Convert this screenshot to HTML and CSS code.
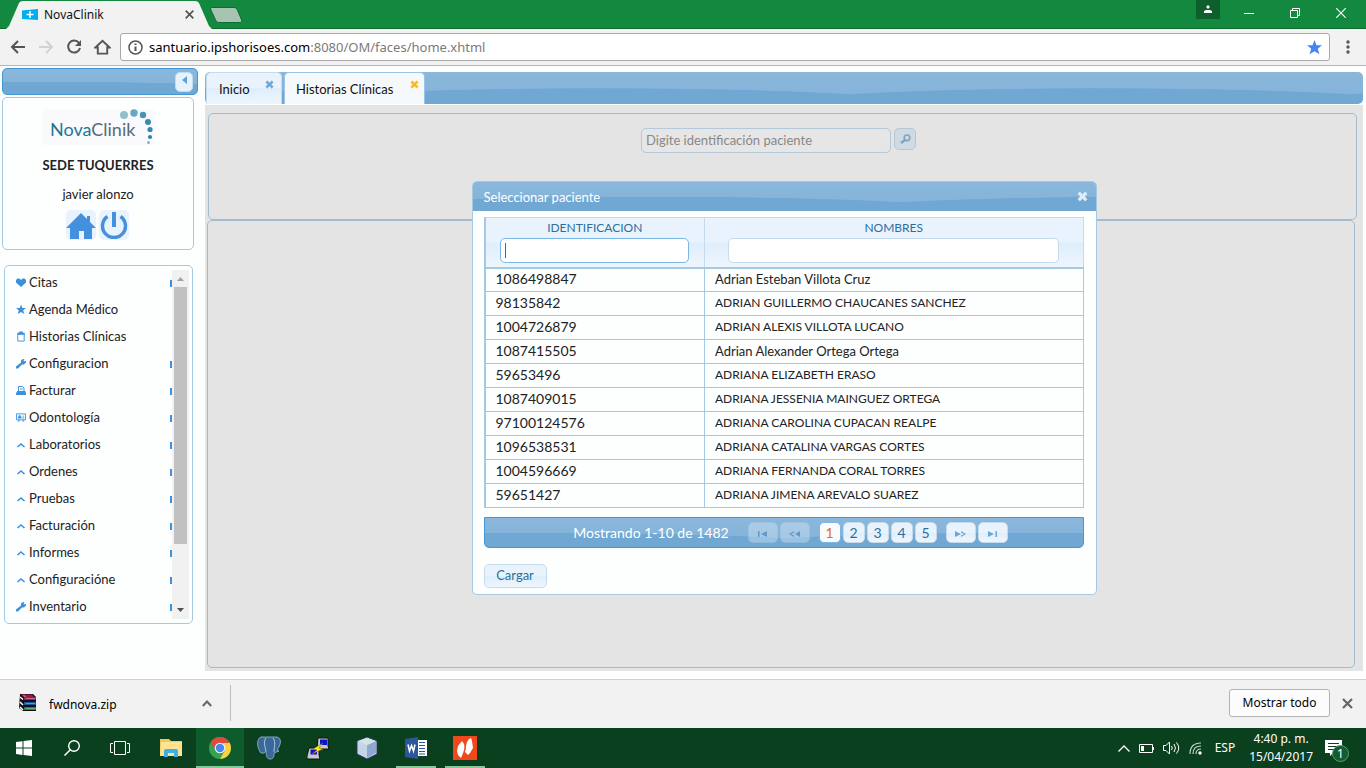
FILE: index.html
```html
<!DOCTYPE html>
<html lang="es">
<head>
<meta charset="utf-8">
<title>NovaClinik</title>
<link rel="stylesheet" href="styles.css">
</head>
<body>
<svg class="defs" aria-hidden="true">
  <symbol id="x" viewBox="0 0 10 10"><path d="M1 2.500 2.500 1 5 3.300 7.500 1 9 2.500 6.800 5 9 7.500 7.500 9 5 6.700 2.500 9 1 7.500 3.200 5Z" fill="currentColor" stroke="currentColor" stroke-width=".8"/></symbol>
  <symbol id="heart" viewBox="0 0 10 10"><path d="M5 9.500 0 5V2.500L1.500 1H3.500L5 2.500 6.500 1H8.500L10 2.500V5Z" fill="currentColor"/></symbol>
  <symbol id="star" viewBox="0 0 10 10"><path d="M5 0 6.300 3.500H10L7.200 5.800 8.300 9.500 5 7.500 1.700 9.500 2.800 5.800 0 3.500H3.700Z" fill="currentColor"/></symbol>
  <symbol id="clip" viewBox="0 0 10 12"><path d="M1.500 3H8.500V11H1.500Z" fill="none" stroke="currentColor"/><path d="M1 2H3V.5H7V2H9V4H1Z" fill="currentColor"/></symbol>
  <symbol id="wrench" viewBox="0 0 10 10"><path d="M0 8 5 4V2L7 .5H8.500L7.500 2 8.500 3 10 2V4L8 6H6L2 10H0Z" fill="currentColor"/></symbol>
  <symbol id="print" viewBox="0 0 10 10"><path d="M2.500 5.500V1H6.500L8 2.500V5.500M4 3.500H6.500" fill="none" stroke="currentColor"/><path d="M1 5.500H9.500V7H10V9.500H0V7H1Z" fill="currentColor"/></symbol>
  <symbol id="card" viewBox="0 0 11 10"><path d="M.5 1H10.500V7.500H.5Z" fill="none" stroke="currentColor"/><path d="M3 2.500H5V4H6V6H2V4H3ZM7 3H9V4H7ZM7 5H9V6H7ZM2 8H4V9.500H2ZM7 8H9V9.500H7Z" fill="currentColor"/></symbol>
  <symbol id="up" viewBox="0 0 10 10"><path d="M1.500 7.500 5 4.500 8.500 7.500" fill="none" stroke="currentColor" stroke-width="1.600"/></symbol>
</svg>

<header class="tabstrip">
  <div class="browser-tab">
    <svg class="tab-shape" viewBox="0 0 206 29" preserveAspectRatio="none"><path d="M0 29 3 26 13 3Q14 1 17 1H189Q192 1 193 3L203 26 206 29Z" fill="#f2f2f2"/></svg>
    <svg class="favicon" viewBox="0 0 16 11"><path d="M0 1.500 16 0V11L0 10Z" fill="#00adef"/><path d="M8 2V9M4.500 5.500H11.500" stroke="#fff" stroke-width="1.500"/></svg>
    <span class="tab-title">NovaClinik</span>
    <button class="plain" aria-label="Cerrar pestaña"><svg width="9" height="9" viewBox="0 0 9 9"><path d="M.7.7 8.300 8.300M8.300.7.7 8.300" stroke="#555" stroke-width="1.700"/></svg></button>
  </div>
  <button class="plain new-tab" aria-label="Nueva pestaña"><svg width="33" height="16" viewBox="0 0 33 16"><path d="M2 .5H24Q26 .5 27 2L32 14Q32 15.500 30 15.500H9Q7 15.500 6 14L.5 2Q0 .5 2 .5Z" fill="#a6c4b1" stroke="#0b6e31"/></svg></button>
  <div class="window-controls">
    <button class="plain profile" aria-label="Perfil"><svg width="8" height="9" viewBox="0 0 8 9"><path d="M4 0 6 2 4 4 2 2ZM0 6 2 5H6L8 6V8H0Z" fill="#fff"/></svg></button>
    <button class="plain" aria-label="Minimizar"><svg width="10" height="10" viewBox="0 0 10 10"><path d="M0 5.500H10" stroke="#fff"/></svg></button>
    <button class="plain" aria-label="Restaurar"><svg width="10" height="10" viewBox="0 0 10 10"><path d="M.5 2.500H7.500V9.500H.5ZM2.500 2.500V.5H9.500V7.500H7.500" fill="none" stroke="#fff"/></svg></button>
    <button class="plain" aria-label="Cerrar"><svg width="10" height="10" viewBox="0 0 10 10"><path d="M.3.3 9.700 9.700M9.700.3.3 9.700" stroke="#fff" stroke-width="1.200"/></svg></button>
  </div>
</header>

<nav class="toolbar" aria-label="Navegación">
  <button class="plain" aria-label="Atrás"><svg width="16" height="14" viewBox="0 0 16 14"><path d="M15 7H2M8 1 2 7 8 13" fill="none" stroke="#555" stroke-width="2"/></svg></button>
  <button class="plain" aria-label="Adelante"><svg width="16" height="14" viewBox="0 0 16 14"><path d="M1 7H14M8 1 14 7 8 13" fill="none" stroke="#d2d2d2" stroke-width="2"/></svg></button>
  <button class="plain" aria-label="Recargar"><svg width="16" height="16" viewBox="0 0 16 16"><path d="M13 4A6 6 0 1 0 14 9" fill="none" stroke="#555" stroke-width="2"/><path d="M15 1V7H9Z" fill="#555"/></svg></button>
  <button class="plain" aria-label="Inicio"><svg width="17" height="16" viewBox="0 0 18 16"><path d="M1.500 8.500 9 1.500 16.500 8.500H14V15H4V8.500Z" fill="none" stroke="#555" stroke-width="2"/></svg></button>
  <div class="address">
    <svg width="15" height="15" viewBox="0 0 15 15"><circle cx="7.500" cy="7.500" r="6.500" fill="none" stroke="#555" stroke-width="1.500"/><path d="M7.500 6.500V11M7.500 3.500V5" stroke="#555" stroke-width="2"/></svg>
    <span class="url">santuario.ipshorisoes.com<span>:8080/OM/faces/home.xhtml</span></span>
    <svg class="star" width="15" height="15"><use href="#star"/></svg>
  </div>
  <button class="plain menu-dots" aria-label="Menú"><svg width="4" height="14" viewBox="0 0 4 14"><circle cx="2" cy="2" r="1.700" fill="#555"/><circle cx="2" cy="7" r="1.700" fill="#555"/><circle cx="2" cy="12" r="1.700" fill="#555"/></svg></button>
</nav>

<div class="page">
  <aside class="sidebar">
    <div class="side-head gloss"><button class="collapse" aria-label="Contraer"><svg width="5" height="8" viewBox="0 0 5 8"><path d="M5 0V8L0 4Z" fill="#5ba0d6"/></svg></button></div>
    <section class="user-card">
      <div class="logo"><span><b>Nova</b>Clinik</span>
        <svg width="36" height="36" viewBox="0 0 36 36"><circle cx="6" cy="6" r="4" fill="#91bfd0"/><circle cx="16" cy="4" r="3.700" fill="#65a8c1"/><circle cx="25" cy="6" r="3.200" fill="#4594b4"/><circle cx="30" cy="13" r="3" fill="#358bb0"/><circle cx="32" cy="20.500" r="2.600" fill="#3289b0"/><circle cx="32" cy="28" r="2.100" fill="#2a83ac"/><circle cx="30.500" cy="33.500" r="1.500" fill="#7fb6cd"/></svg>
      </div>
      <strong>SEDE TUQUERRES</strong>
      <span>javier alonzo</span>
      <div class="user-actions">
        <a href="#home" aria-label="Inicio"><svg width="30" height="28" viewBox="0 0 30 28"><path d="M15 2 21 8V5H24V11L30 17H26V28H18V20H13V28H4V17H0Z" fill="#458fdf"/></svg></a>
        <a href="#logout" aria-label="Salir"><svg width="28" height="28" viewBox="0 0 28 28"><path d="M7.500 5.500A11.500 11.500 0 1 0 20.500 5.500" fill="none" stroke="#458fdf" stroke-width="3.400"/><path d="M14 1V16" stroke="#458fdf" stroke-width="4"/></svg></a>
      </div>
    </section>
    <nav class="menu" aria-label="Menú principal">
      <ul>
        <li class="sub"><a href="#citas"><svg><use href="#heart"/></svg>Citas</a></li>
        <li><a href="#agenda"><svg><use href="#star"/></svg>Agenda Médico</a></li>
        <li><a href="#historias"><svg><use href="#clip"/></svg>Historias Clínicas</a></li>
        <li class="sub"><a href="#config"><svg><use href="#wrench"/></svg>Configuracion</a></li>
        <li class="sub"><a href="#facturar"><svg><use href="#print"/></svg>Facturar</a></li>
        <li class="sub"><a href="#odonto"><svg><use href="#card"/></svg>Odontología</a></li>
        <li class="sub"><a href="#lab"><svg><use href="#up"/></svg>Laboratorios</a></li>
        <li class="sub"><a href="#ordenes"><svg><use href="#up"/></svg>Ordenes</a></li>
        <li class="sub"><a href="#pruebas"><svg><use href="#up"/></svg>Pruebas</a></li>
        <li class="sub"><a href="#facturacion"><svg><use href="#up"/></svg>Facturación</a></li>
        <li class="sub"><a href="#informes"><svg><use href="#up"/></svg>Informes</a></li>
        <li class="sub"><a href="#configuracione"><svg><use href="#up"/></svg>Configuracióne</a></li>
        <li class="sub"><a href="#inventario"><svg><use href="#wrench"/></svg>Inventario</a></li>
      </ul>
      <div class="scrollbar"><svg width="7" height="4" viewBox="0 0 7 4"><path d="M0 4H7L3.500 0Z" fill="#a3a3a3"/></svg><i></i><svg width="7" height="4" viewBox="0 0 7 4"><path d="M0 0H7L3.500 4Z" fill="#505050"/></svg></div>
    </nav>
  </aside>

  <main>
    <div class="tabs gloss">
      <div class="tab"><a href="#inicio">Inicio</a><button class="plain" aria-label="Cerrar Inicio"><svg width="9" height="9"><use href="#x"/></svg></button></div>
      <div class="tab active"><a href="#hc">Historias Clínicas</a><button class="plain" aria-label="Cerrar Historias Clínicas"><svg width="9" height="9"><use href="#x"/></svg></button></div>
    </div>
    <div class="workspace">
      <section class="panel search">
        <input class="field" type="text" aria-label="Identificación paciente" placeholder="Digite identificación paciente">
        <button class="btn find" aria-label="Buscar"><svg width="11" height="10" viewBox="0 0 11 10"><circle cx="7" cy="3.800" r="2.800" fill="none" stroke="#7ba4c4" stroke-width="1.600"/><path d="M5 6 1 9" stroke="#7ba4c4" stroke-width="2.200"/></svg></button>
      </section>
      <section class="panel body"></section>
      <div class="overlay">
        <div class="dialog" role="dialog" aria-labelledby="dlg">
          <div class="dialog-head gloss"><span id="dlg">Seleccionar paciente</span><button class="plain" aria-label="Cerrar"><svg width="11" height="11"><use href="#x"/></svg></button></div>
          <div class="dialog-body">
            <table>
              <colgroup><col class="c1"><col></colgroup>
              <thead><tr>
                <th><label for="fid">IDENTIFICACION</label><span class="focus"><input id="fid" type="text"></span></th>
                <th><label for="fnom">NOMBRES</label><span class="wide"><input id="fnom" type="text"></span></th>
              </tr></thead>
              <tbody>
                <tr><td class="num">1086498847</td><td>Adrian Esteban Villota Cruz</td></tr>
                <tr><td class="num">98135842</td><td class="caps">ADRIAN GUILLERMO CHAUCANES SANCHEZ</td></tr>
                <tr><td class="num">1004726879</td><td class="caps">ADRIAN ALEXIS VILLOTA LUCANO</td></tr>
                <tr><td class="num">1087415505</td><td>Adrian Alexander Ortega Ortega</td></tr>
                <tr><td class="num">59653496</td><td class="caps">ADRIANA ELIZABETH ERASO</td></tr>
                <tr><td class="num">1087409015</td><td class="caps">ADRIANA JESSENIA MAINGUEZ ORTEGA</td></tr>
                <tr><td class="num">97100124576</td><td class="caps">ADRIANA CAROLINA CUPACAN REALPE</td></tr>
                <tr><td class="num">1096538531</td><td class="caps">ADRIANA CATALINA VARGAS CORTES</td></tr>
                <tr><td class="num">1004596669</td><td class="caps">ADRIANA FERNANDA CORAL TORRES</td></tr>
                <tr><td class="num">59651427</td><td class="caps">ADRIANA JIMENA AREVALO SUAREZ</td></tr>
              </tbody>
            </table>
            <div class="pager gloss">
              <span class="count">Mostrando 1-10 de 1482</span>
              <div class="group">
                <button class="btn nav" disabled aria-label="Primera"><svg width="9" height="6" viewBox="0 0 9 6"><path d="M0 0H1.500V6H0ZM9 0V6L3 3Z"/></svg></button>
                <button class="btn nav" disabled aria-label="Anterior"><svg width="11" height="6" viewBox="0 0 11 6"><path d="M11 0V6L6 3ZM5 0V1.500L2 3 5 4.500V6L0 3Z"/></svg></button>
              </div>
              <div class="group pages">
                <button class="btn current">1</button><button class="btn">2</button><button class="btn">3</button><button class="btn">4</button><button class="btn">5</button>
              </div>
              <div class="group">
                <button class="btn nav" aria-label="Siguiente"><svg width="11" height="6" viewBox="0 0 11 6"><path d="M0 0V6L6 3ZM6 0V1.500L9 3 6 4.500V6L11 3Z"/></svg></button>
                <button class="btn nav" aria-label="Última"><svg width="9" height="6" viewBox="0 0 9 6"><path d="M9 0H7.500V6H9ZM0 0V6L6 3Z"/></svg></button>
              </div>
            </div>
            <button class="btn load">Cargar</button>
          </div>
        </div>
      </div>
    </div>
  </main>
</div>

<section class="downloads" aria-label="Descargas">
  <div class="download">
    <svg width="18" height="18" viewBox="0 0 18 18"><path d="M1 0H14L17 3V17H4L0 14Z" fill="#111"/><path d="M2 .5H13L15 3H4Z" fill="#9b1450"/><path d="M5 3H17V6H5Z" fill="#a51a5c"/><path d="M1 3 4 5.500M1 8 4 11M1 13 4 16" stroke="#fff" stroke-width="1.500"/><path d="M5 8H17V11H5Z" fill="#1f55a5"/><path d="M5 13H17V16H5Z" fill="#138a58"/><path d="M7 4.500H16M7 9.500H16M7 14.500H16" stroke="#fff" stroke-opacity=".35"/><path d="M4.500 1 6.500 3" fill="none" stroke="#e0c531"/></svg>
    <span>fwdnova.zip</span>
    <button class="plain" aria-label="Opciones"><svg width="10" height="7" viewBox="0 0 10 7"><path d="M.8 6 5 1.500 9.200 6" fill="none" stroke="#666" stroke-width="2"/></svg></button>
  </div>
  <button class="show-all">Mostrar todo</button>
  <button class="plain" aria-label="Cerrar descargas"><svg width="11" height="11" viewBox="0 0 11 11"><path d="M1 1 10 10M10 1 1 10" stroke="#666" stroke-width="2.200"/></svg></button>
</section>

<footer class="taskbar">
  <div class="system">
    <button class="app" aria-label="Inicio de Windows"><svg width="16" height="16" viewBox="0 0 16 16"><path d="M0 2 6.500 1.200V7.500H0ZM7.500 1 16 0V7.500H7.500ZM0 8.500H6.500V15L0 14ZM7.500 8.500H16V16L7.500 15Z" fill="#fff"/></svg></button>
    <button class="app" aria-label="Buscar"><svg width="16" height="16" viewBox="0 0 16 16"><circle cx="10" cy="6" r="5.300" fill="none" stroke="#fff" stroke-width="1.400"/><path d="M6.300 9.700.5 15.500" stroke="#fff" stroke-width="1.500"/></svg></button>
    <button class="app" aria-label="Vista de tareas"><svg width="20" height="14" viewBox="0 0 20 14"><path d="M4.500.5H15.500V13.500H4.500ZM3 2.500H.5V11.500H3M17 2.500H19.500V11.500H17" fill="none" stroke="#fff"/></svg></button>
  </div>
  <div class="apps">
    <button class="app" aria-label="Explorador"><svg width="22" height="18" viewBox="0 0 22 18"><path d="M0 0H9L11 2H22V17H0Z" fill="#f2c659"/><path d="M1 3H22V17H0Z" fill="#ffe391"/><path d="M4 18V12Q4 10 6 10H16Q18 10 18 12V18H14V14H8V18Z" fill="#3bb1e7"/></svg></button>
    <button class="app selected" aria-label="Chrome"><svg width="22" height="22" viewBox="0 0 22 22"><circle cx="11" cy="11" r="11" fill="#32a350"/><path d="M1.500 5.500A11 11 0 0 1 20.500 5.500H11L6 12Z" fill="#dd4b3e"/><path d="M20.500 5.500A11 11 0 0 1 11 22L16 13 14 6Z" fill="#fdd13f"/><path d="M11 5.500H20.500" stroke="#dd4b3e"/><circle cx="11" cy="11" r="5.300" fill="#f3f3f3"/><circle cx="11" cy="11" r="4.200" fill="#4687f4"/></svg></button>
    <button class="app" aria-label="PostgreSQL"><svg width="24" height="24" viewBox="0 0 24 24"><path d="M4 1C-1 3 0 12 4 17L7 17 9 15C9 20 10 23 13 23 17 23 17 20 17 17L22 15 20 14C24 9 25 2 20 1L15 1 12 1 9 1Z" fill="#38699a" stroke="#8ba5b8"/><path d="M9 2C6 6 8 10 9 15M16 2C19 6 17 11 17 16" fill="none" stroke="#b7c8d5"/></svg></button>
    <button class="app" aria-label="PuTTY"><svg width="23" height="23" viewBox="0 0 23 23"><path d="M11 1H21V9L22 12H10ZM2 11H12V18L13 22H0V19Z" fill="#c9c9c9" stroke="#111"/><path d="M13 2.500H20V8H13ZM3.500 12.500H10V17.500H3.500Z" fill="#0b14d4"/><path d="M16 6 6 12 10 13 5 17 16 12 12 11Z" fill="#fced17" stroke="#775c00" stroke-width=".5"/></svg></button>
    <button class="app" aria-label="VirtualBox"><svg width="22" height="24" viewBox="0 0 22 24"><path d="M11 1 21 5V18L11 23 1 18V5Z" fill="#d6e3ed" stroke="#27356b"/><path d="M2 5 11 9V22L2 17Z" fill="#c3d6e8"/><path d="M20 5 11 9V22L20 17Z" fill="#8ea9cd"/><path d="M11 2 20 5 11 9 2 5Z" fill="#d4e5e0"/></svg></button>
    <button class="app open" aria-label="Word"><svg width="22" height="22" viewBox="0 0 22 22"><path d="M12 3H22V19H12Z" fill="#fff"/><path d="M14 5.500H20M14 8.500H20M14 11.500H20M14 14.500H20M14 17H20" stroke="#2b579a"/><path d="M0 2 13 0V22L0 20Z" fill="#2b579a"/><path d="M3 7.500 4.500 14 6.500 8.500 8.500 14 10 7.500" fill="none" stroke="#fff" stroke-width="1.500"/></svg></button>
    <button class="app open" aria-label="Nitro"><svg width="24" height="24" viewBox="0 0 24 24"><path d="M0 0H24V24H0Z" fill="#f1471d"/><path d="M5 10 9 5 11 8C12 12 11 15 8 22L5 19 4 15ZM13 12C13 8 14 4 18 2L19 5 20 12 17 17 15 19 12 16Z" fill="#fff"/></svg></button>
  </div>
  <div class="tray">
    <svg width="12" height="7" viewBox="0 0 12 7"><path d="M.5 6.500 6 1 11.500 6.500" fill="none" stroke="#fff" stroke-width="1.300"/></svg>
    <svg width="15" height="9" viewBox="0 0 15 9"><path d="M.5.5H13.500V8.500H.5ZM14.500 3V6" fill="none" stroke="#fff"/><path d="M2 2H5V7H2Z" fill="#fff"/></svg>
    <svg width="17" height="14" viewBox="0 0 17 14"><path d="M.5 4.500H3L6.500 1V13L3 9.500H.5ZM8.500 5Q10 7 8.500 9M11 3Q14 7 11 11M13.500 1.500Q18 7 13.500 12.500" fill="none" stroke="#fff"/></svg>
    <svg class="wifi" width="13" height="13" viewBox="0 0 13 13"><path d="M1 12Q1 1 12 1M4 12Q4 4 12 4M7 12Q7 7 12 7" fill="none" stroke="#c4d3ca" stroke-width="1.200"/><circle cx="11" cy="11" r="1.700" fill="#fff"/></svg>
    <span class="lang">ESP</span>
    <div class="clock"><span>4:40 p. m.</span><span>15/04/2017</span></div>
    <button class="plain notify" aria-label="Notificaciones"><svg width="17" height="16" viewBox="0 0 17 16"><path d="M0 0H17V13H8L5 16V13H0Z" fill="#fff"/><path d="M3 3.500H14M3 6.500H14M3 9.500H9" stroke="#0b401f"/></svg><span>1</span></button>
  </div>
</footer>
</body>
</html>
```
FILE: styles.css
```css
* { box-sizing: border-box; }

body {
  margin: 0;
  min-height: 100vh;
  display: flex;
  flex-direction: column;
  background: #fdfefe;
  color: #222;
  font: 13px/18px Lato, "Noto Sans", sans-serif;
}

button, input { font: inherit; color: inherit; }
button { cursor: pointer; }
a { color: inherit; text-decoration: none; }
svg { display: block; flex: none; }

.defs { width: 0; height: 0; position: absolute; }
.plain { border: 0; padding: 0; background: none; }

/* Browser frame */
.tabstrip {
  display: flex;
  height: 29px;
  background: #12893e;
  border-bottom: 1px solid #0d6b30;
}
.browser-tab {
  position: relative;
  display: flex;
  align-items: center;
  flex: none;
  width: 206px;
  height: 29px;
  margin-left: 6px;
  padding: 0 18px 0 16px;
  font: 12px/16px "Noto Sans", sans-serif;
  color: #111;
}
.tab-shape { position: absolute; inset: 0; width: 100%; height: 100%; }
.favicon { position: relative; width: 16px; height: 11px; }
.tab-title { position: relative; flex: 1; margin-left: 6px; }
.browser-tab .plain { position: relative; }
.new-tab { align-self: center; margin-left: -2px; padding-top: 2px; }
.window-controls { display: flex; margin-left: auto; padding-right: 2px; }
.window-controls .plain { width: 46px; height: 26px; display: grid; place-items: center; }
.window-controls .profile { width: 24px; height: 19px; background: #0f5f2d; margin-right: 6px; }

.toolbar {
  display: flex;
  align-items: center;
  gap: 12px;
  height: 37px;
  padding: 0 16px 0 10px;
  background: #f2f2f2;
  border-bottom: 1px solid #b6b4b6;
}
.address {
  flex: 1;
  display: flex;
  align-items: center;
  height: 28px;
  margin-left: -3px;
  padding: 0 7px;
  background: #fff;
  border: 1px solid #a9a9a9;
  border-radius: 3px;
}
.url { flex: 1; margin-left: 6px; font: 13px/20px "Noto Sans", sans-serif; color: #000; }
.url span { color: #7b7b7b; }
.address .star { color: #4285f4; }
.menu-dots { margin-left: 4px; }

/* Application */
.page { flex: 1; display: flex; gap: 7px; padding: 2px 3px 8px 2px; }

.gloss {
  background:
    radial-gradient(ellipse 65% 50% at 50% 100%, #70a7d3 96%, transparent 100%) 0 0 / 500px 100%,
    linear-gradient(#8ab7db, #83b2d9);
}
.sidebar { width: 196px; flex: none; }
.side-head {
  display: flex;
  justify-content: flex-end;
  align-items: center;
  height: 27px;
  padding-right: 4px;
  border: 1px solid #4297d7;
  border-radius: 5px;
}
.side-head.gloss { background-position: -230px 0; }
.collapse {
  display: grid;
  place-items: center;
  width: 18px;
  height: 20px;
  padding: 0 0 3px;
  border: 1px solid #c5dbec;
  border-radius: 5px;
  background: #e6f2fc;
}
.user-card {
  display: flex;
  flex-direction: column;
  align-items: center;
  width: 192px;
  height: 153px;
  margin-top: 2px;
  padding-top: 11px;
  border: 1px solid #a6c9e2;
  border-radius: 5px;
}
.user-card strong { margin-top: 11px; }
.user-card > span { margin-top: 11px; }
.logo { display: flex; align-items: flex-start; width: 112px; height: 36px; padding-left: 8px; background: #fafafc; }
.logo > span { width: 86px; margin-top: 8px; font: 18px/24px Lato, sans-serif; color: #586a78; }
.logo b { font-weight: 400; color: #217697; }
.logo svg { margin-left: -18px; }
.user-actions { display: flex; gap: 3px; margin-top: 7px; padding-right: 2px; }
.user-actions a { width: 30px; height: 30px; display: grid; place-items: center; background: #e8f3fd; border-radius: 5px; }

.menu {
  display: flex;
  width: 189px;
  height: 359px;
  margin: 15px 0 0 2px;
  padding: 4px 3px 4px 8px;
  border: 1px solid #a6c9e2;
  border-radius: 5px;
}
.menu ul { flex: 1; margin: 0; padding: 0; list-style: none; overflow: hidden; }
.menu li { display: flex; align-items: center; height: 27px; padding: 0 0 3px 3px; }
.menu a { flex: 1; display: flex; align-items: center; gap: 3px; }
.menu a svg { width: 10px; height: 11px; color: #3d91dc; }
.menu .sub::after { content: ""; width: 2px; height: 7px; margin-top: 2px; background: #3d91dc; }
.scrollbar {
  display: flex;
  flex-direction: column;
  align-items: center;
  width: 17px;
  padding: 7px 2px;
  background: #f1f1f1;
}
.scrollbar i { width: 13px; height: 257px; margin: 6px 0 auto; background: #c1c1c1; }

main { flex: 1; display: flex; flex-direction: column; padding-top: 4px; }
.tabs { display: flex; gap: 2px; height: 32px; margin-bottom: 1px; padding-left: 1px; border-radius: 5px; }
.tabs.gloss { background-position: 145px 0, 0 0; }
.tab {
  display: flex;
  justify-content: space-between;
  width: 76px;
  padding: 7px 7px 0 12px;
  border: 1px solid #c5dbec;
  border-bottom: 0;
  border-radius: 5px 5px 0 0;
  background: linear-gradient(#e9f3fd 50%, #deeefb 50%, #eef6fe);
  color: #111;
}
.tab .plain { align-self: flex-start; color: #6aa7d6; }
.tab.active { width: 141px; padding-left: 11px; padding-right: 5px; background: #f6f9fb; border-color: #9cc5e5; }
.tab.active .plain { color: #fbb917; }

.workspace {
  position: relative;
  flex: 1;
  display: flex;
  flex-direction: column;
  padding: 8px 6px 3px 2px;
  background: #e4e4e4;
}
.panel { border: 1px solid #a3bccd; border-radius: 5px; }
.search { display: flex; justify-content: center; gap: 3px; height: 107px; margin-left: 1px; padding: 14px 14px 14px 6px; }
.field {
  width: 250px;
  height: 25px;
  padding: 0 4px 2px;
  border: 1px solid #b3c8d8;
  border-radius: 5px;
  background: #e6e6e6;
}
.field::placeholder { color: #888; opacity: 1; }
.body { flex: 1; margin-right: 2px; }

.btn {
  padding: 0;
  border: 1px solid #c5dbec;
  border-radius: 5px;
  background: linear-gradient(#e9f3fd 50%, #deeefb 50%, #eef6fe);
  color: #2e6e9e;
}
.find { display: grid; place-items: center; width: 22px; height: 22px; background: #d0dae3; border-color: #b5c6d4; }

/* Patient dialog */
.overlay { position: absolute; inset: 0; display: flex; align-items: center; justify-content: center; }
.dialog { width: 625px; background: #fdfefe; border: 1px solid #a6c9e2; border-radius: 5px; overflow: hidden; }
.dialog-head { display: flex; justify-content: space-between; align-items: center; height: 29px; padding: 0 8px 0 11px; color: #fff; }
.dialog-head.gloss { background-position: -72px 0, 0 0; }
.dialog-head .plain { color: #e0eefb; }
.dialog-body { padding: 6px 12px 6px 11px; }

table { width: 100%; border-collapse: collapse; table-layout: fixed; border-left: 2px solid #a6c9e2; }
.c1 { width: 220px; }
th {
  height: 50px;
  padding: 0;
  vertical-align: top;
  border: 1px solid #c5dbec;
  border-bottom: 2px solid #a6c9e2;
  background: linear-gradient(#e9f3fd 50%, #deeefb 50%, #eef6fe);
  color: #2e6e9e;
  font-size: 12px;
  font-weight: 400;
}
th label { display: block; line-height: 20px; }
th span { display: block; width: 189px; margin: 0 auto; }
th .wide { width: 331px; }
th input { display: block; width: 100%; height: 25px; padding: 0 4px; border: 1px solid #c5dbec; border-radius: 5px; background: #fff; }
th .focus { position: relative; }
.focus input { border-color: #79b7e7; }
.focus::after { content: ""; position: absolute; left: 5px; top: 5px; width: 1px; height: 15px; background: #2e6e9e; }
td { height: 24px; padding: 0 10px 2px; border: 1px solid #a6c9e2; white-space: nowrap; }
td.num { font-size: 14px; }
td.caps { font-size: 12px; }

.pager {
  display: flex;
  align-items: center;
  justify-content: center;
  gap: 9px;
  height: 31px;
  margin-top: 9px;
  padding-left: 14px;
  border: 1px solid #4297d7;
  border-radius: 0 0 5px 5px;
  color: #fff;
}
.pager.gloss { background-position: -200px 0, 0 0; }
.count { margin-right: 10px; font-size: 14px; }
.group { display: flex; gap: 2px; }
.pager .btn { width: 22px; height: 21px; font-size: 14px; line-height: 18px; }
.pager .nav { width: 30px; display: grid; place-items: center; padding-top: 3px; }
.nav svg { fill: #6aa7d6; }
.pager .btn:disabled { opacity: .35; }
.pager .btn:disabled svg { fill: #20659b; }
.pager .current { background: #fafbfd; border-color: #79b7e7; color: #e17009; }
.load { display: block; width: 63px; height: 24px; margin-top: 16px; padding-bottom: 2px; }

/* Downloads bar */
.downloads {
  display: flex;
  align-items: center;
  height: 49px;
  padding: 0 13px 2px 0;
  background: #f2f2f2;
  border-top: 1px solid #d0d2d0;
  font: 12px/16px "Noto Sans", sans-serif;
  color: #000;
}
.download {
  display: flex;
  align-items: center;
  width: 231px;
  height: 36px;
  padding: 0 18px 0 19px;
  border-right: 1px solid #bdbdbd;
}
.download span { flex: 1; margin: 4px 0 0 12px; }
.show-all { width: 101px; height: 28px; margin: 0 12px 0 auto; padding: 0; border: 1px solid #b2b2b2; border-radius: 3px; background: #fcfcfc; }

/* Windows taskbar */
.taskbar { display: flex; height: 40px; background: #0b401f; color: #fff; }
.system { display: flex; }
.apps { display: flex; gap: 1px; margin-left: 3px; }
.app {
  display: grid;
  place-items: center;
  width: 48px;
  height: 40px;
  padding: 0;
  border: 0;
  background: none;
}
.open { background: linear-gradient(#84c79b, #84c79b) 50% 100% / 40px 2px no-repeat; }
.selected { background: #0e5c2b; box-shadow: inset 0 -2px #84c79b; }
.tray { display: flex; align-items: center; gap: 9px; margin-left: auto; padding-right: 24px; font: 12px/18px "Noto Sans", sans-serif; }
.wifi { margin-right: 4px; }
.clock { display: flex; flex-direction: column; align-items: center; margin: 0 3px 0 5px; }
.notify { position: relative; }
.notify span {
  position: absolute;
  left: 7px;
  top: 5px;
  width: 17px;
  height: 17px;
  border: 1px solid #5c9d74;
  border-radius: 50%;
  background: #145c30;
  font: 12px/15px "Noto Sans", sans-serif;
  text-align: center;
}
```
